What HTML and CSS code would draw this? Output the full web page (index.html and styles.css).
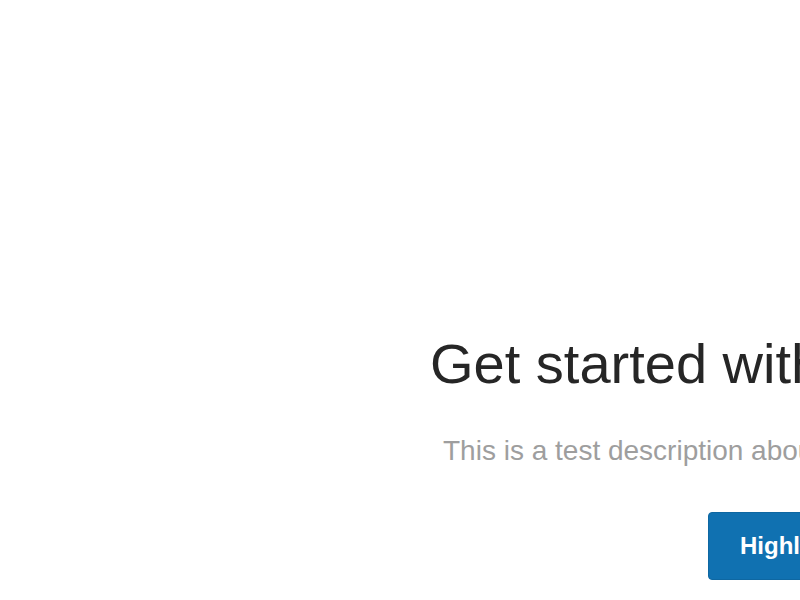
FILE: index.html
```html
<!DOCTYPE html>
<html lang="en">
<head>
<meta charset="utf-8">
<title>Get started</title>
<link rel="stylesheet" href="styles.css">
</head>
<body>
<main class="hero">
  <h1 class="hero-title">Get started with highlights</h1>
  <p class="hero-desc">This is a test description about how to get started with highlights.</p>
  <button class="hero-btn" type="button">Highlight something</button>
</main>
</body>
</html>
```

FILE: styles.css
```css
html, body {
  margin: 0;
  padding: 0;
  width: 800px;
  height: 600px;
  overflow: hidden;
  background: #ffffff;
}

body {
  font-family: "Liberation Sans", Arial, Helvetica, sans-serif;
}

.hero {
  display: flex;
  flex-direction: column;
  align-items: flex-start;
  padding: 330px 0 0 430px;
  white-space: nowrap;
}

.hero-title {
  margin: 0;
  font-size: 56px;
  font-weight: 400;
  line-height: 1.2;
  color: #262626;
}

.hero-desc {
  margin: 33px 0 0 13px;
  font-size: 28px;
  line-height: 1.5;
  color: #9e9e9e;
}

.hero-btn {
  margin: 40px 0 0 278px;
  padding: 15px 31px;
  font-family: inherit;
  font-size: 24px;
  font-weight: 700;
  line-height: 1.5;
  color: #ffffff;
  background: #1071b1;
  border: 1px solid #0e67a2;
  border-radius: 4px;
  white-space: nowrap;
}
```
